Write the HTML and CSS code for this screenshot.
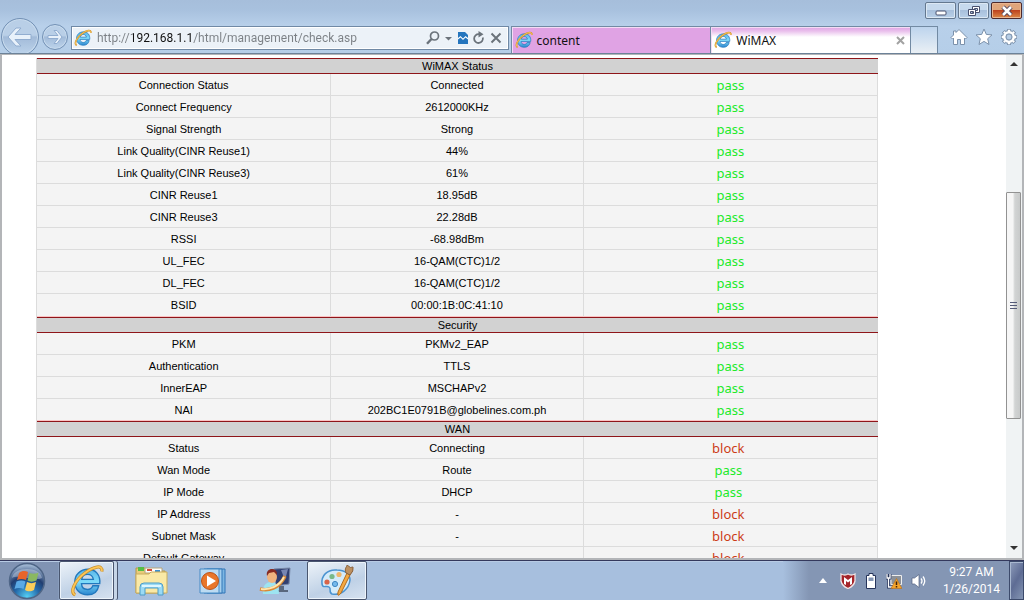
FILE: index.html
```html
<!DOCTYPE html>
<html lang="en">
<head>
<meta charset="utf-8">
<title>WiMAX</title>
<link rel="stylesheet" href="styles.css">
</head>
<body>
<svg class="defs" aria-hidden="true">
  <defs>
    <linearGradient id="ieBlue" x1="0" y1="0" x2="0" y2="1"><stop offset="0" stop-color="#58b4e8"/><stop offset=".5" stop-color="#7fdcfa"/><stop offset="1" stop-color="#2a86cf"/></linearGradient>
    <radialGradient id="orb" cx=".5" cy=".95" r=".9"><stop offset="0" stop-color="#55d0f5"/><stop offset=".4" stop-color="#2468a8"/><stop offset=".65" stop-color="#223e70"/><stop offset="1" stop-color="#9db4d0"/></radialGradient>
    <symbol id="ie" viewBox="0 0 32 32">
      <path d="M27 20.500H21.500C20.500 23 18.500 24 16.500 24C13 24 11 21.500 10.800 18.500H28C28.800 10 24 5 17 5C9.500 5 4.500 10 4.500 17C4.500 24 9.500 29 16.500 29C22 29 26 26 27 20.500ZM11 14.500C11.500 11.500 13.500 9.800 16.500 9.800C19.500 9.800 21.500 11.500 22 14.500Z" fill="url(#ieBlue)" stroke="#2278bd" stroke-width="1.300"/>
      <path d="M5 29C-1 27 5 15 14 8.500C22 2.500 31 0 30 7" fill="none" stroke="#c98f2c" stroke-width="3"/>
      <path d="M5 29C-1 27 5 15 14 8.500C22 2.500 31 0 30 7" fill="none" stroke="#fbc658" stroke-width="1.700"/>
    </symbol>
  </defs>
</svg>

<header class="chrome">
  <div class="window-controls">
    <button class="win-btn" aria-label="Minimize"><svg width="14" height="12"><rect x="2" y="6" width="10" height="4" rx="1" fill="#fff" stroke="#48506e"/></svg></button>
    <button class="win-btn" aria-label="Restore"><svg width="14" height="12"><path d="M5.500 1.500H12.500V7.500H5.500ZM7.500 3.500H10.500V5.500H7.500Z" fill="#fff" fill-rule="evenodd" stroke="#48506e"/><path d="M1.500 4.500H8.500V10.500H1.500ZM3.500 6.500H6.500V8.500H3.500Z" fill="#fff" fill-rule="evenodd" stroke="#48506e"/></svg></button>
    <button class="win-btn win-close" aria-label="Close window"><svg width="14" height="12"><path d="M3 2L11 10M11 2L3 10" stroke="#4b4057" stroke-width="4.500"/><path d="M3 2L11 10M11 2L3 10" stroke="#fff" stroke-width="2.600"/></svg></button>
  </div>
  <nav class="toolbar">
    <button class="round back" aria-label="Back"><svg width="26" height="22" viewBox="0 0 26 22"><path d="M14 2H9L1 11L9 20H14L8 13.500H24V8.500H8Z" fill="#e8f1fa" stroke="#91add0"/></svg></button>
    <button class="round forward" aria-label="Forward"><svg width="16" height="16" viewBox="0 0 16 16"><path d="M7 1.500H10L15 8L10 14.500H7L11 9.500H1V6.500H11Z" fill="#e8f1fa" stroke="#91add0"/></svg></button>
    <div class="address">
      <svg width="18" height="18"><use href="#ie"/></svg>
      <input class="url" type="text" aria-label="Address" value="http://192.168.1.1/html/management/check.asp">
      <button class="icon-btn" aria-label="Search"><svg width="14" height="14" viewBox="0 0 14 14" fill="none" stroke="#6b737b"><circle cx="8.500" cy="5" r="4" stroke-width="1.700"/><path d="M5.500 8L1 12.800" stroke-width="2.400"/></svg></button>
      <button class="icon-btn" aria-label="Address list"><svg width="8" height="14"><path d="M0 6H7L3.500 9.500Z" fill="#6b737b"/></svg></button>
      <button class="icon-btn" aria-label="Compatibility view"><svg width="10" height="14" viewBox="0 0 10 14"><path d="M0 1H7L10 4V13H0Z" fill="#2475be"/><path d="M0 7L2.500 5L5 7.500L7.500 5L10 7V8.500L7.500 6.500L5 9L2.500 6.500L0 8.500Z" fill="#fff"/></svg></button>
      <button class="icon-btn" aria-label="Refresh"><svg width="12" height="14" viewBox="0 0 12 14"><path d="M9.800 6.500A4.400 4.400 0 1 1 6 3.200" fill="none" stroke="#6b737b" stroke-width="1.800"/><path d="M5.500 0L10.500 3.200L5.500 6.400Z" fill="#6b737b"/></svg></button>
      <button class="icon-btn" aria-label="Stop"><svg width="12" height="14" viewBox="0 0 12 14"><path d="M1.500 2.500L10.500 11.500M10.500 2.500L1.500 11.500" stroke="#6b737b" stroke-width="2"/></svg></button>
    </div>
    <div class="tabs">
      <div class="tab"><button class="tab-label"><svg width="18" height="18"><use href="#ie"/></svg>content</button></div>
      <div class="tab tab-active"><button class="tab-label"><svg width="18" height="18"><use href="#ie"/></svg>WiMAX</button><button class="icon-btn" aria-label="Close tab"><svg width="9" height="9"><path d="M1 1L8 8M8 1L1 8" stroke="#a2a2a2" stroke-width="2"/></svg></button></div>
      <button class="new-tab" aria-label="New tab"></button>
    </div>
    <div class="tools">
      <button class="icon-btn" aria-label="Home"><svg width="18" height="18" viewBox="0 0 18 18"><path d="M9 1.500L17 9.500L15.500 11L14.500 10V16.500H10.500V11.500H7.500V16.500H3.500V10L2.500 11L1 9.500L3.500 7V3H6V4.500Z" fill="#fff" stroke="#7b91ab"/></svg></button>
      <button class="icon-btn" aria-label="Favorites"><svg width="18" height="18" viewBox="0 0 18 18"><path d="M9 1L11.300 6.400L17 6.900L12.700 10.700L14 16.500L9 13.400L4 16.500L5.300 10.700L1 6.900L6.700 6.400Z" fill="#fff" stroke="#7b91ab"/></svg></button>
      <button class="icon-btn" aria-label="Tools"><svg width="18" height="18" viewBox="0 0 18 18"><path d="M9 1V17M1 9H17M3.300 3.300L14.700 14.700M14.700 3.300L3.300 14.700" stroke="#7b91ab" stroke-width="4"/><circle cx="9" cy="9" r="5" fill="none" stroke="#7b91ab" stroke-width="4"/><path d="M9 1.700V4M9 14V16.300M1.700 9H4M14 9H16.300M3.900 3.900L5 5M13 13L14.100 14.100M14.100 3.900L13 5M5 13L3.900 14.100" stroke="#fff" stroke-width="2.400"/><circle cx="9" cy="9" r="4.700" fill="none" stroke="#fff" stroke-width="2.600"/><circle cx="9" cy="9" r="2.900" fill="#b7cee6" stroke="#7b91ab" stroke-width=".8"/></svg></button>
    </div>
  </nav>
</header>

<main class="viewport">
  <div class="page">
    <table class="checks">
      <colgroup><col class="col-name"><col class="col-value"><col class="col-result"></colgroup>
      <tbody>
        <tr><th colspan="3">WiMAX Status</th></tr>
        <tr><td>Connection Status</td><td>Connected</td><td class="pass">pass</td></tr>
        <tr><td>Connect Frequency</td><td>2612000KHz</td><td class="pass">pass</td></tr>
        <tr><td>Signal Strength</td><td>Strong</td><td class="pass">pass</td></tr>
        <tr><td>Link Quality(CINR Reuse1)</td><td>44%</td><td class="pass">pass</td></tr>
        <tr><td>Link Quality(CINR Reuse3)</td><td>61%</td><td class="pass">pass</td></tr>
        <tr><td>CINR Reuse1</td><td>18.95dB</td><td class="pass">pass</td></tr>
        <tr><td>CINR Reuse3</td><td>22.28dB</td><td class="pass">pass</td></tr>
        <tr><td>RSSI</td><td>-68.98dBm</td><td class="pass">pass</td></tr>
        <tr><td>UL_FEC</td><td>16-QAM(CTC)1/2</td><td class="pass">pass</td></tr>
        <tr><td>DL_FEC</td><td>16-QAM(CTC)1/2</td><td class="pass">pass</td></tr>
        <tr class="tall"><td>BSID</td><td>00:00:1B:0C:41:10</td><td class="pass">pass</td></tr>
      </tbody>
      <tbody>
        <tr><th colspan="3">Security</th></tr>
        <tr><td>PKM</td><td>PKMv2_EAP</td><td class="pass">pass</td></tr>
        <tr><td>Authentication</td><td>TTLS</td><td class="pass">pass</td></tr>
        <tr><td>InnerEAP</td><td>MSCHAPv2</td><td class="pass">pass</td></tr>
        <tr><td>NAI</td><td>202BC1E0791B@globelines.com.ph</td><td class="pass">pass</td></tr>
      </tbody>
      <tbody class="wan">
        <tr><th colspan="3">WAN</th></tr>
        <tr><td>Status</td><td>Connecting</td><td class="block">block</td></tr>
        <tr><td>Wan Mode</td><td>Route</td><td class="pass">pass</td></tr>
        <tr><td>IP Mode</td><td>DHCP</td><td class="pass">pass</td></tr>
        <tr><td>IP Address</td><td>-</td><td class="block">block</td></tr>
        <tr><td>Subnet Mask</td><td>-</td><td class="block">block</td></tr>
        <tr><td>Default Gateway</td><td></td><td class="block">block</td></tr>
      </tbody>
    </table>
  </div>
  <div class="scrollbar">
    <button class="icon-btn scroll-arrow" aria-label="Scroll up"><svg width="8" height="5"><path d="M4 0L8 4H0Z" fill="#333"/></svg></button>
    <div class="track"><div class="thumb"><svg width="7" height="9"><path d="M0 1.500H7M0 4.500H7M0 7.500H7" stroke="#555b78"/></svg></div></div>
    <button class="icon-btn scroll-arrow" aria-label="Scroll down"><svg width="8" height="5"><path d="M0 0H8L4 4Z" fill="#333"/></svg></button>
  </div>
</main>

<footer class="taskbar">
  <button class="start" aria-label="Start"><svg width="38" height="38" viewBox="0 0 38 38"><circle cx="19" cy="19" r="17.500" fill="url(#orb)" stroke="#4f6687" stroke-width="1.500"/><path d="M4 16C6 4 32 4 34 16C26 20 12 12 4 16Z" fill="#d9e4ef" opacity=".4"/><path d="M11 11C14 8.500 17 8.500 20 10L18 18C15 16.500 12 16.500 9 18Z" fill="#e8652b"/><path d="M21.500 11C24 12 28 12 30.500 10.500L28.500 18.500C25 20 22 20 19.500 18.500Z" fill="#8ab861"/><path d="M8.500 19.500C11.500 18 15 18 17.500 19.500L15.500 27C13 25.500 9 25.500 6.500 27Z" fill="#5ba9e4"/><path d="M19 20C22 21.500 25 21.500 28 20L26 28C23 30 19 29.500 17 28Z" fill="#fbcd59"/></svg></button>
  <div class="apps">
    <button class="app app-open app-stacked" aria-label="Internet Explorer"><svg width="34" height="34"><use href="#ie"/></svg></button>
    <button class="app" aria-label="Windows Explorer"><svg width="34" height="32" viewBox="0 0 34 32"><path d="M2 28V3H11L13 6H31V28Z" fill="#e9cc79" stroke="#b69648"/><path d="M4 2H10V6H4Z" fill="#56bd45"/><path d="M11 3H28V8H11Z" fill="#fff" stroke="#b5a47b"/><path d="M13 4H18V6H13Z" fill="#d44a35"/><path d="M21 5H26V7H21Z" fill="#3e91d0"/><path d="M2 9H15L17 7H33V28H2Z" fill="#fae9a6" stroke="#c9ad60"/><path d="M6 30V22Q6 18 10 18H25Q29 18 29 22V30H24V23H11V30Z" fill="#9bdaf4" stroke="#4d9cc8"/><path d="M8 21H27" stroke="#def6ff" stroke-width="2"/></svg></button>
    <button class="app" aria-label="Windows Media Player"><svg width="28" height="28" viewBox="0 0 28 28"><path d="M8 2H26V26H8Z" fill="#7db6e2" stroke="#3277b8"/><path d="M5 2H23V26H5Z" fill="#a6d0ee" stroke="#3277b8"/><path d="M1 2H20V26H1Z" fill="#bcdbf2" stroke="#478bc6"/><circle cx="11" cy="14" r="8.500" fill="#e9762a" stroke="#bc5317"/><path d="M8 8.500L17 14L8 19.500Z" fill="#fff"/></svg></button>
    <button class="app" aria-label="Display assistant"><svg width="32" height="28" viewBox="0 0 32 28"><path d="M15 2L31 1L30 17L17 19Z" fill="#303f70" stroke="#7786a5"/><path d="M22 3L29 2L26 13Z" fill="#7786b2"/><path d="M20 19H25V23H29V25H17V23H20Z" fill="#59677d"/><path d="M4 27C3 19 7 15 12 15C17 15 20 19 20 27Z" fill="#9de4f1"/><ellipse cx="13" cy="10" rx="5" ry="6" fill="#efb37e"/><path d="M8 9C6 0 19 0 18 8L15 5L10 6Z" fill="#872b22"/><path d="M1 22C9 24 20 22 26 9" fill="none" stroke="#d98a37" stroke-width="3.500"/><path d="M2 22C10 23 20 20 25 10" fill="none" stroke="#ffe4ac" stroke-width="2"/></svg></button>
    <button class="app app-open" aria-label="Paint"><svg width="34" height="32" viewBox="0 0 34 32"><path d="M17 5C7 4 1 11 2 19C3 24 6 20 9 22C12 24 8 27 12 29C21 31 29 24 30 15C30 9 25 5 17 5Z" fill="#d4ebfa" stroke="#4a93d0" stroke-width="1.500"/><circle cx="7" cy="17" r="2.600" fill="#d86448"/><circle cx="12" cy="11.500" r="2.600" fill="#77b989"/><circle cx="19" cy="9.500" r="2.600" fill="#efb76c"/><circle cx="15" cy="19" r="2.600" fill="#75b9ec" stroke="#3f86c3"/><path d="M27 8L30 10L21 28Q17 33 18 27Z" fill="#f3a942" stroke="#b36c1d"/><path d="M26 8C24 3 27 2 27 0Q31 4 33 2Q34 6 30 10Z" fill="#bd9060" stroke="#89613b"/></svg></button>
  </div>
  <div class="tray">
    <button class="icon-btn" aria-label="Show hidden icons"><svg width="8" height="5"><path d="M4 0L8 5H0Z" fill="#fff"/></svg></button>
    <svg width="16" height="16" viewBox="0 0 16 16" role="img" aria-label="Antivirus"><path d="M1 1Q5 3 8 1Q11 3 15 1V8Q14 13 8 15.500Q2 13 1 8Z" fill="#a5242a" stroke="#f0e4e5" stroke-width="1.300"/><path d="M4 11V4L8 7L12 4V11L10 12V8L8 9.500L6 8V12Z" fill="#fff"/></svg>
    <svg width="12" height="16" viewBox="0 0 12 16" role="img" aria-label="Battery"><path d="M4 .500H8V2.500H10.500V15.500H1.500V2.500H4Z" fill="#fff" stroke="#26345b"/><path d="M3.500 4.500H8.500V8H3.500Z" fill="#8496b4"/></svg>
    <svg width="16" height="16" viewBox="0 0 16 16" role="img" aria-label="Network warning"><path d="M5 2.500H15.500V11.500H5Z" fill="#8c9198" stroke="#eee"/><path d="M1 1V5H4V1M2.500 5V14H7" fill="none" stroke="#26345b" stroke-width="3"/><path d="M1 1V5H4V1M2.500 5V14H7" fill="none" stroke="#fff" stroke-width="1.300"/><path d="M10.500 5.500L16 15.500H5Z" fill="#f5a42b" stroke="#b76c17" stroke-width=".6"/><path d="M10.500 8.500V12M10.500 13V14.500" stroke="#40210a" stroke-width="1.500"/></svg>
    <svg width="16" height="14" viewBox="0 0 16 14" role="img" aria-label="Volume"><path d="M1 4H3.500L8 .500V13.500L3.500 10H1Z" fill="#fff" stroke="#506080" stroke-width=".7"/><path d="M10 4.500Q12 7 10 9.500M12 2.500Q15.500 7 12 11.500" fill="none" stroke="#fff" stroke-width="1.300"/></svg>
  </div>
  <div class="clock"><time>9:27 AM</time><time>1/26/2014</time></div>
  <button class="show-desktop" aria-label="Show desktop"></button>
</footer>
</body>
</html>
```

FILE: styles.css
```css
* { box-sizing: border-box; }

body {
  margin: 0;
  height: 100vh;
  display: flex;
  flex-direction: column;
  overflow: hidden;
  font-family: "Noto Sans", "Open Sans", sans-serif;
  font-size: 12px;
}

button {
  display: flex;
  align-items: center;
  justify-content: center;
  margin: 0;
  padding: 0;
  border: 0;
  background: none;
  font: inherit;
  color: inherit;
}

svg { display: block; flex: none; }
.defs { position: absolute; width: 0; height: 0; }

/* Browser frame */
.chrome {
  flex: none;
  overflow: hidden;
  background: linear-gradient(#a6bedb, #a8c1de 10px, #b8d0ea 26px, #b5cee8);
  border-bottom: 1px solid #6c8298;
}

.window-controls {
  display: flex;
  justify-content: flex-end;
  gap: 2px;
  height: 20px;
  padding: 2px 2px 1px 0;
}

.win-btn {
  width: 31px;
  border: 1px solid #64788f;
  border-radius: 2px;
  background: linear-gradient(#c6d9ed 50%, #a8c0dc 50%, #b9d0e8);
  box-shadow: inset 0 0 0 1px #dce8f4;
}

.win-close {
  border-color: #4d2a2c;
  background: linear-gradient(#dfa57b 50%, #bd4420 50%, #dc8846);
  box-shadow: inset 0 0 0 1px #e8b590;
}

.toolbar {
  display: flex;
  align-items: center;
  height: 33px;
  padding-left: 1px;
}

.round {
  flex: none;
  border: 1px solid #7391b5;
  border-radius: 50%;
  background: linear-gradient(#b9cfe7 45%, #a2bbd9 50%, #bdd4eb);
  box-shadow: inset 0 0 0 1px #c9dcee;
}

.back { width: 38px; height: 38px; }
.forward { width: 26px; height: 26px; margin: 0 3px; }

.address {
  flex: 1;
  display: flex;
  align-items: center;
  gap: 5px;
  height: 24px;
  padding: 0 6px 0 2px;
  margin-top: 3px;
  border: 1px solid #7089a5;
  background: #ecf2f8;
  box-shadow: inset 0 0 0 1px #fff;
}

.url {
  flex: 1;
  min-width: 0;
  padding: 0;
  border: 0;
  outline: 0;
  font-family: Roboto, "Noto Sans", sans-serif;
  font-size: 12px;
  color: transparent;
  background: linear-gradient(90deg, #7b8085 36px, #111 36px, #111 95px, #7b8085 95px);
  -webkit-background-clip: text;
  background-clip: text;
}

.tabs {
  flex: 1;
  display: flex;
  align-self: flex-end;
  height: 27px;
  margin-left: 2px;
}

.tab {
  flex: 1;
  display: flex;
  align-items: center;
  padding: 0 5px 0 3px;
  border: 1px solid #728aa3;
  border-bottom: 0;
  background: #e0a3e4;
  box-shadow: inset 1px 1px 0 #f4dcf5;
}

.tab + .tab { border-left: 0; }
.tab-active { background: linear-gradient(#e0a3e4, #e9bfec 4px, #fff 10px); }
.tab-label { flex: 1; justify-content: flex-start; gap: 4px; color: #111; }

.new-tab {
  width: 27px;
  border: 1px solid #728aa3;
  border-left: 0;
  border-bottom: 0;
  background: linear-gradient(#bdd4ed, #eaf0f5);
}

.tools {
  flex: none;
  display: flex;
  gap: 7px;
  padding: 0 6px 0 12px;
}

/* Document area */
.viewport {
  flex: 1;
  min-height: 0;
  display: flex;
  border: 2px solid #b3b5b8;
  border-width: 1px 2px 2px;
  background: #fff;
}

.page {
  flex: 1;
  overflow: hidden;
  padding: 3px 128px 0 34px;
}

.checks {
  width: 100%;
  table-layout: fixed;
  border-spacing: 0;
  border-left: 1px solid #dcdcdc;
  background: #f4f4f4;
  font-family: "Liberation Sans", Arial, sans-serif;
  font-size: 11px;
  line-height: 14px;
  text-align: center;
  color: #000;
}

.col-name, .col-result { width: 35%; }
.col-value { width: 30%; }

.checks th {
  height: 16px;
  padding: 0;
  border: 1px solid #8e1519;
  border-width: 1px 0;
  background: #d2d2d2;
  font-weight: normal;
}

.checks td {
  height: 22px;
  padding: 0;
  border: 1px solid #dcdcdc;
  border-width: 0 1px 1px 0;
}

.checks .tall td { height: 23px; }
.checks tbody:not(.wan) tr:last-child td { border-bottom-color: #fbc4c4; }

.checks .pass, .checks .block {
  font-family: "Noto Sans", "Open Sans", sans-serif;
  font-size: 13px;
}

.checks .pass { color: #20ea28; }
.checks .block { color: #cc3c18; }
.wan .pass, .wan .block { padding-right: 4px; }

.scrollbar {
  flex: none;
  display: flex;
  flex-direction: column;
  width: 16px;
  background: #f0f3f4;
}

.scroll-arrow { height: 19px; }
.track { flex: 1; padding: 118px 1px 0 0; }

.thumb {
  display: flex;
  align-items: center;
  justify-content: center;
  height: 61%;
  min-height: 227px;
  border: 1px solid #929292;
  border-radius: 1px;
  background: linear-gradient(90deg, #f6f6f6 45%, #d2d4d4 60%, #c8caca);
}

/* Taskbar */
.taskbar {
  flex: none;
  display: flex;
  height: 40px;
  border-top: 1px solid #34395d;
  background: linear-gradient(90deg, #8093b3 58px, #a7bfde 60px);
  box-shadow: inset 0 1px 0 #b8cbe4;
}

.start { width: 53px; margin-right: 6px; }
.apps { flex: 1; display: flex; gap: 2px; }
.app { width: 60px; }

.app-open {
  border: 1px solid #49566f;
  border-radius: 2px;
  background: linear-gradient(160deg, #edf3f9, #bfd1e6 60%, #d6e2f0);
  box-shadow: inset 0 0 0 1px #edf4fb;
}

.app-stacked {
  width: 55px;
  margin-right: 5px;
  box-shadow: inset 0 0 0 1px #edf4fb, 3px 0 0 #c6d5e7, 4px 0 0 #49566f;
}

.tray {
  display: flex;
  align-items: center;
  gap: 9px;
  padding: 0 16px 0 36px;
  background: linear-gradient(90deg, #a7bfde, #8496b4 26px);
}

.tray .icon-btn { margin-right: 4px; }

.clock {
  display: flex;
  flex-direction: column;
  align-items: center;
  justify-content: center;
  padding-right: 9px;
  line-height: 17px;
  font-family: Roboto, "Noto Sans", sans-serif;
  background: #8496b4;
  color: #fff;
}

.show-desktop {
  width: 15px;
  border: 1px solid #3c4a6b;
  background: linear-gradient(120deg, #8e9dbb, #5e6c94 50%, #8495b3);
  box-shadow: inset 1px 1px 0 #a9b8d0;
}
```
